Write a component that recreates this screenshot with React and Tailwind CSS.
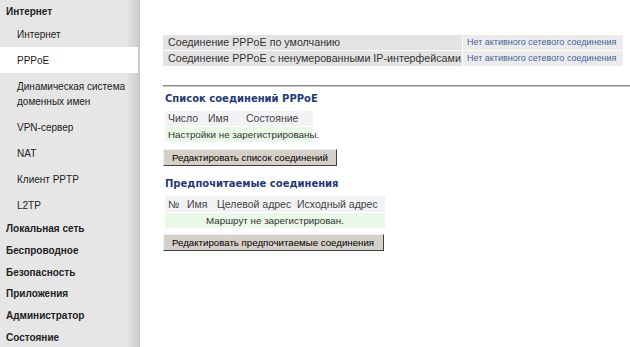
import React from "react";

const subItems = [
  { label: "Интернет" },
  { label: "PPPoE", active: true },
  { label: ["Динамическая система", "доменных имен"] },
  { label: "VPN-сервер" },
  { label: "NAT" },
  { label: "Клиент PPTP" },
  { label: "L2TP" },
];

const topItems = [
  "Локальная сеть",
  "Беспроводное",
  "Безопасность",
  "Приложения",
  "Администратор",
  "Состояние",
];

const defaults = [
  "Соединение PPPoE по умолчанию",
  "Соединение PPPoE с ненумерованными IP-интерфейсами",
];

const Sidebar = () => (
  <div className="w-[140px] shrink-0 bg-gradient-to-r from-[#e6e6e6] from-90% to-[#c9c9c9] font-['Liberation_Sans',sans-serif] text-[10px] text-[#222] whitespace-nowrap">
    <div className="pl-[6px] pt-[4px] h-[21px] font-bold">Интернет</div>
    {subItems.map((it, i) => (
      <div
        key={i}
        className={
          "pl-[17px] flex flex-col justify-center " +
          (Array.isArray(it.label) ? "h-[41px] leading-[15px]" : "h-[26px]") +
          (it.active ? " bg-white mr-[2px]" : "")
        }
      >
        {Array.isArray(it.label)
          ? it.label.map((l) => <span key={l}>{l}</span>)
          : it.label}
      </div>
    ))}
    {topItems.map((t) => (
      <div key={t} className="pl-[6px] h-[21.7px] flex items-center font-bold">
        {t}
      </div>
    ))}
  </div>
);

const btn =
  "-ml-[2px] block h-[17px] bg-[#d4d0c8] border border-t-[#f0f0f0] border-l-[#f0f0f0] border-r-[#404040] border-b-[#404040] text-[9.7px] leading-[14px] text-black pl-[8px] text-left";

const App = () => {
  return (
    <div className="flex w-[630px] h-[347px] overflow-hidden bg-white whitespace-nowrap">
      <Sidebar />
      <div className="flex-1 pt-[35px] font-['Liberation_Sans',sans-serif]">
        <div className="ml-[23px] mr-[7px] flex flex-col gap-[1px]">
          {defaults.map((d) => (
            <div key={d} className="flex gap-[1px] h-[15px]">
              <div className="w-[299px] bg-[#e3e3e3] pl-[5px] text-[10.7px] leading-[15px] text-[#333]">
                {d}
              </div>
              <div className="flex-1 bg-[#ebebeb] pl-[4px] text-[9px] leading-[15px] text-[#4763a0]">
                Нет активного сетевого соединения
              </div>
            </div>
          ))}
        </div>
        <div className="ml-[23px] mt-[19px] h-[2px] bg-[#8a8a8a] border-b border-[#c8c8c8]" />
        <div className="ml-[25px] mt-[5px]">
          <div className="font-['DejaVu_Sans',sans-serif] font-bold text-[10px] leading-[14px] text-[#1f3a7a] h-[14px]">
            Список соединений PPPoE
          </div>
          <div className="mt-[5px] w-[148px]">
            <div className="flex h-[15px] bg-[#f2f2f5] text-[10.5px] leading-[15px] text-[#444]">
              <span className="pl-[3px] w-[43px]">Число</span>
              <span className="w-[38px]">Имя</span>
              <span>Состояние</span>
            </div>
            <div className="mt-[1px] h-[15px] bg-[#eaf8e8] pl-[3px] text-[9.8px] leading-[15px] text-[#333]">
              Настройки не зарегистрированы.
            </div>
          </div>
          <button className={btn + " mt-[7px] w-[174px]"}>
            Редактировать список соединений
          </button>
          <div className="mt-[11px] font-['DejaVu_Sans',sans-serif] font-bold text-[10px] leading-[14px] text-[#1f3a7a] h-[14px]">
            Предпочитаемые соединения
          </div>
          <div className="mt-[5px] w-[220px]">
            <div className="flex h-[16px] bg-[#f2f2f5] text-[10.5px] leading-[16px] text-[#444]">
              <span className="pl-[3px] w-[19px]">№</span>
              <span className="pl-[3px] w-[30px]">Имя</span>
              <span className="pl-[3px] w-[80px]">Целевой адрес</span>
              <span className="pl-[3px]">Исходный адрес</span>
            </div>
            <div className="mt-[1px] h-[15px] bg-[#eaf8e8] text-center text-[9.8px] leading-[15px] text-[#333]">
              Маршрут не зарегистрирован.
            </div>
          </div>
          <button className={btn + " mt-[6px] w-[221px]"}>
            Редактировать предпочитаемые соединения
          </button>
        </div>
      </div>
    </div>
  );
};

export default App;
